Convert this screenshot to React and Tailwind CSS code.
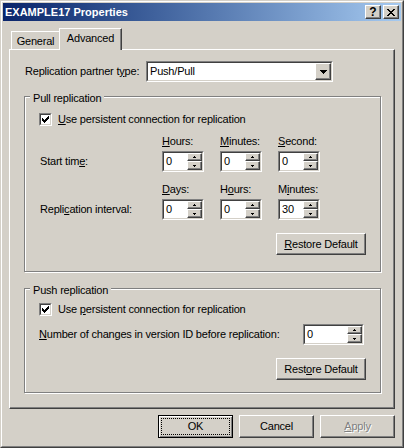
import React from "react";

const sunkenOuter = "border border-t-[#808080] border-l-[#808080] border-r-white border-b-white";
const sunkenInner = "border border-t-[#404040] border-l-[#404040] border-r-[#d4d0c8] border-b-[#d4d0c8]";
const raised =
  "bg-[#d4d0c8] border border-t-white border-l-white border-r-[#404040] border-b-[#404040] shadow-[inset_-1px_-1px_0_#808080]";

function UpArrow() {
  return (
    <svg width="5" height="2" viewBox="0 0 5 2" shapeRendering="crispEdges">
      <path d="M2 0h1v1h1v1H1V1h1z" fill="#000" />
    </svg>
  );
}

function DownArrow() {
  return (
    <svg width="5" height="2" viewBox="0 0 5 2" shapeRendering="crispEdges">
      <path d="M1 0h3v1H3v1H2V1H1z" fill="#000" />
    </svg>
  );
}

function Check() {
  return (
    <div className={"w-[13px] h-[13px] shrink-0 " + sunkenOuter}>
      <div className={"w-full h-full bg-white flex items-center justify-center " + sunkenInner}>
        <svg width="7" height="7" viewBox="0 0 7 7" shapeRendering="crispEdges">
          <path
            d="M6 0h1v1H6z M5 1h2v1H5z M0 2h1v1H0z M4 2h3v1H4z M0 3h2v1H0z M3 3h3v1H3z M0 4h5v1H0z M1 5h3v1H1z M2 6h1v1H2z"
            fill="#000"
          />
        </svg>
      </div>
    </div>
  );
}

function Spin({ value, className = "w-[42px]" }) {
  return (
    <div className={"h-[21px] " + sunkenOuter + " " + className}>
      <div className={"h-full flex bg-white " + sunkenInner}>
        <span className="flex-1 pl-[2px] self-center">{value}</span>
        <div className="w-[15px] flex flex-col">
          <div className={"h-[8px] flex items-center justify-center " + raised}>
            <UpArrow />
          </div>
          <div className={"flex-1 flex items-center justify-center " + raised}>
            <DownArrow />
          </div>
        </div>
      </div>
    </div>
  );
}

function Combo() {
  return (
    <div className={"w-[187px] h-[21px] " + sunkenOuter}>
      <div className={"h-full flex bg-white " + sunkenInner}>
        <span className="flex-1 pl-[2px] self-center">Push/Pull</span>
        <div className={"w-[16px] h-full flex items-center justify-center " + raised}>
          <svg width="7" height="4" viewBox="0 0 7 4" shapeRendering="crispEdges">
            <path d="M0 0h7v1H6v1H5v1H4v1H3V3H2V2H1V1H0z" fill="#000" />
          </svg>
        </div>
      </div>
    </div>
  );
}

function Group({ title, className = "", children }) {
  return (
    <div className={"w-[357px] border border-[#808080] shadow-[1px_1px_0_#fff,inset_1px_1px_0_#fff] " + className}>
      <div className="-mt-[5px] ml-[5px] w-fit px-[3px] bg-[#d4d0c8]">{title}</div>
      {children}
    </div>
  );
}

function Button({ children, className = "" }) {
  return (
    <button type="button" className={"flex items-center justify-center " + raised + " " + className}>
      {children}
    </button>
  );
}

function TitleBtn({ children }) {
  return <div className={"w-[16px] h-[14px] flex items-center justify-center " + raised}>{children}</div>;
}

export default function App() {
  return (
    <div className="w-[404px] h-[448px] bg-[#d4d0c8] border border-t-[#d4d0c8] border-l-[#d4d0c8] border-r-[#404040] border-b-[#404040] font-['Liberation_Sans',Arial,sans-serif] text-[11px] leading-[13px] tracking-[-0.2px] text-black select-none">
      <div className="h-full flex flex-col border border-t-white border-l-white border-r-[#808080] border-b-[#808080] p-px">
        {/* caption */}
        <div className="h-[18px] shrink-0 flex items-center px-[2px] bg-linear-to-r from-[#0a246a] to-[#a6caf0]">
          <span className="font-bold text-white tracking-normal">EXAMPLE17 Properties</span>
          <div className="ml-auto flex gap-[2px]">
            <TitleBtn>
              <span className="font-bold text-[12px] leading-[12px] tracking-normal">?</span>
            </TitleBtn>
            <TitleBtn>
              <svg width="8" height="7" viewBox="0 0 8 7" shapeRendering="crispEdges">
                <path
                  d="M0 0h2v1H0z M6 0h2v1H6z M1 1h2v1H1z M5 1h2v1H5z M2 2h4v1H2z M3 3h2v1H3z M2 4h4v1H2z M1 5h2v1H1z M5 5h2v1H5z M0 6h2v1H0z M6 6h2v1H6z"
                  fill="#000"
                />
              </svg>
            </TitleBtn>
          </div>
        </div>

        <div className="px-[6px]">
          {/* tabs */}
          <div className="h-[28px] flex items-end pl-[2px]">
            <div className="w-[48px] h-[18px] border-t border-l border-t-white border-l-white pt-[3px] text-center">
              General
            </div>
            <div className="relative z-10 -mb-px w-[63px] h-[22px] bg-[#d4d0c8] border-t border-l border-r border-t-white border-l-white border-r-[#404040] shadow-[inset_-1px_0_0_#808080] pt-[3px] text-center">
              Advanced
            </div>
          </div>

          {/* page */}
          <div className="h-[360px] border border-t-white border-l-white border-r-[#404040] border-b-[#404040] shadow-[inset_-1px_-1px_0_#808080] pt-[11px] pl-[14px]">
            <div className="flex items-center h-[21px]">
              <span className="w-[122px] pl-px">
                Replication partner t<u>y</u>pe:
              </span>
              <Combo />
            </div>

            <Group title="Pull replication" className="mt-[14px]">
              <div className="mt-[8px] pl-[14px] flex items-center gap-[6px] h-[13px]">
                <Check />
                <span>
                  <u>U</u>se persistent connection for replication
                </span>
              </div>

              <div className="mt-[9px] pl-[14px] grid grid-cols-[107px_42px_42px_42px] gap-x-[16px] gap-y-[3px]">
                <span />
                <span>
                  <u>H</u>ours:
                </span>
                <span>
                  <u>M</u>inutes:
                </span>
                <span>
                  <u>S</u>econd:
                </span>
                <span className="self-center pl-px">
                  Start tim<u>e</u>:
                </span>
                <Spin value="0" />
                <Spin value="0" />
                <Spin value="0" />
              </div>

              <div className="mt-[11px] pl-[14px] grid grid-cols-[107px_42px_42px_42px] gap-x-[16px] gap-y-[3px]">
                <span />
                <span>
                  <u>D</u>ays:
                </span>
                <span>
                  H<u>o</u>urs:
                </span>
                <span>
                  M<u>i</u>nutes:
                </span>
                <span className="self-center pl-px">
                  Repli<u>c</u>ation interval:
                </span>
                <Spin value="0" />
                <Spin value="0" />
                <Spin value="30" />
              </div>

              <div className="mt-[13px] flex justify-end pr-[14px] pb-[16px]">
                <Button className="w-[90px] h-[22px]">
                  <span>
                    <u>R</u>estore Default
                  </span>
                </Button>
              </div>
            </Group>

            <Group title="Push replication" className="mt-[16px]">
              <div className="mt-[6px] pl-[14px] flex items-center gap-[6px] h-[13px]">
                <Check />
                <span>
                  Use <u>p</u>ersistent connection for replication
                </span>
              </div>

              <div className="mt-[8px] pl-[14px] pr-[16px] flex items-center justify-between">
                <span>
                  <u>N</u>umber of changes in version ID before replication:
                </span>
                <Spin value="0" className="w-[61px]" />
              </div>

              <div className="mt-[13px] flex justify-end pr-[14px] pb-[12px]">
                <Button className="w-[90px] h-[22px]">
                  <span>
                    Rest<u>o</u>re Default
                  </span>
                </Button>
              </div>
            </Group>
          </div>
        </div>

        {/* dialog buttons */}
        <div className="mt-[6px] flex justify-end gap-[6px] pr-[6px]">
          <button
            type="button"
            className="w-[75px] h-[23px] flex p-[2px] bg-[#d4d0c8] border border-black shadow-[inset_1px_1px_0_#fff,inset_-1px_-1px_0_#808080]"
          >
            <span className="flex-1 flex items-center justify-center border border-dotted border-black">OK</span>
          </button>
          <Button className="w-[75px] h-[23px]">Cancel</Button>
          <Button className="w-[75px] h-[23px]">
            <span className="text-[#808080] [text-shadow:1px_1px_0_#fff]">
              <u>A</u>pply
            </span>
          </Button>
        </div>
      </div>
    </div>
  );
}
